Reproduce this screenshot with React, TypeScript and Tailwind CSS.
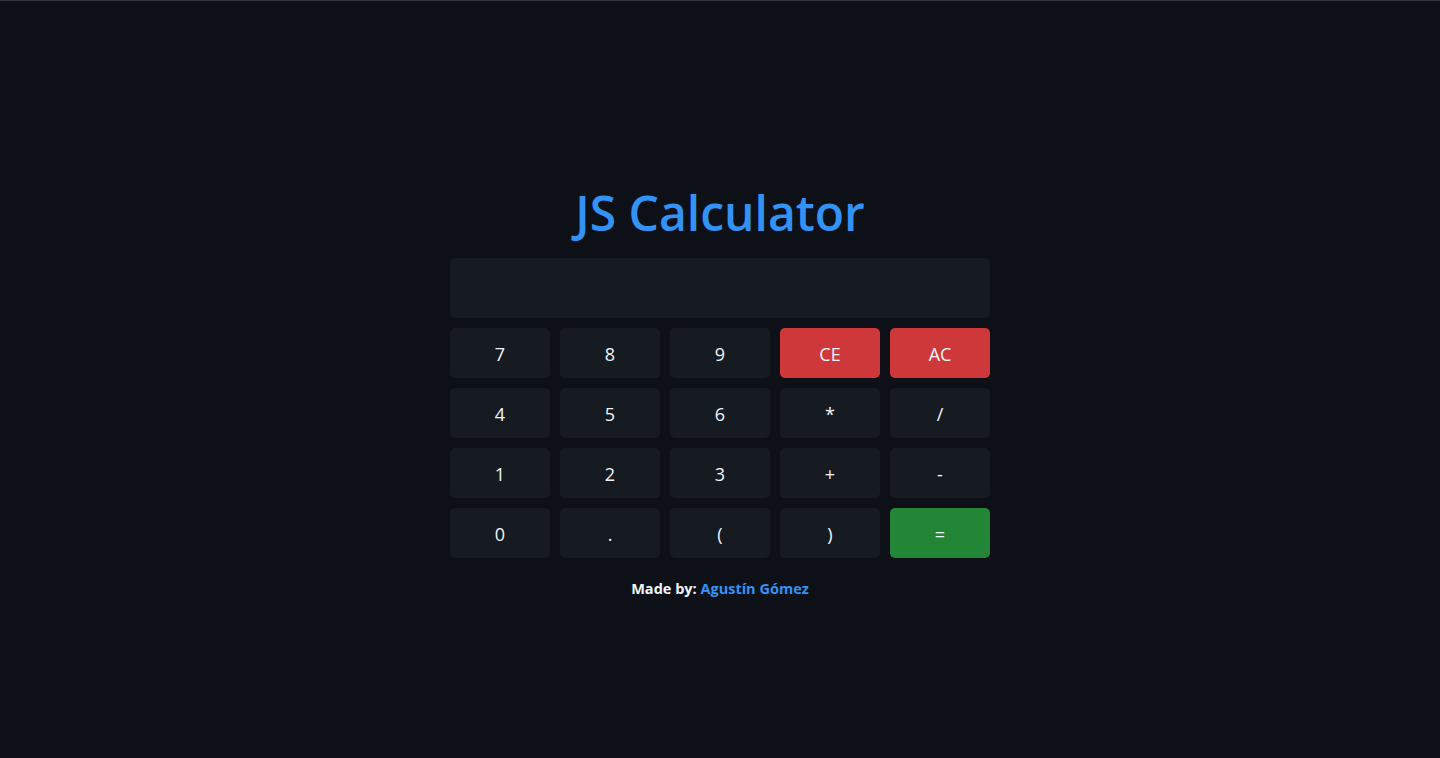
import { memo } from 'react';

const rows: { label: string; tone?: 'red' | 'green' }[][] = [
    [{ label: '7' }, { label: '8' }, { label: '9' }, { label: 'CE', tone: 'red' }, { label: 'AC', tone: 'red' }],
    [{ label: '4' }, { label: '5' }, { label: '6' }, { label: '*' }, { label: '/' }],
    [{ label: '1' }, { label: '2' }, { label: '3' }, { label: '+' }, { label: '-' }],
    [{ label: '0' }, { label: '.' }, { label: '(' }, { label: ')' }, { label: '=', tone: 'green' }],
];

const Key = ({ label, tone }: { label: string; tone?: 'red' | 'green' }) => {
    const bg =
        tone === 'red' ? 'bg-[#cf383b]' : tone === 'green' ? 'bg-[#238636]' : 'bg-[#161b22]';
    return (
        <button className={`${bg} w-[100px] h-[50px] pt-[3px] rounded-[5px] flex items-center justify-center text-[18px] text-[#f0f6fc]`}>
            {label}
        </button>
    );
};

const App = memo(() => {
    return (
        <div
            className="w-full h-[758px] bg-[#0d1117] border-t border-[#30363d] flex flex-col items-center pt-[183px]"
            style={{ fontFamily: '"Open Sans", "Noto Sans", sans-serif' }}
        >
            <h1 className="text-[48px] leading-[58px] font-semibold text-[#3392f5] mb-[16px]">
                JS Calculator
            </h1>
            <div className="w-[540px] h-[60px] bg-[#161b22] rounded-[5px] mb-[10px]" />
            <div className="grid grid-cols-5 gap-[10px]">
                {rows.flat().map((k) => (
                    <Key key={k.label} label={k.label} tone={k.tone} />
                ))}
            </div>
            <p className="mt-[21px] text-[14.5px] leading-[20px] font-bold text-[#f0f6fc]">
                Made by: <span className="text-[#3392f5]">Agustín Gómez</span>
            </p>
        </div>
    );
});

export default App;
